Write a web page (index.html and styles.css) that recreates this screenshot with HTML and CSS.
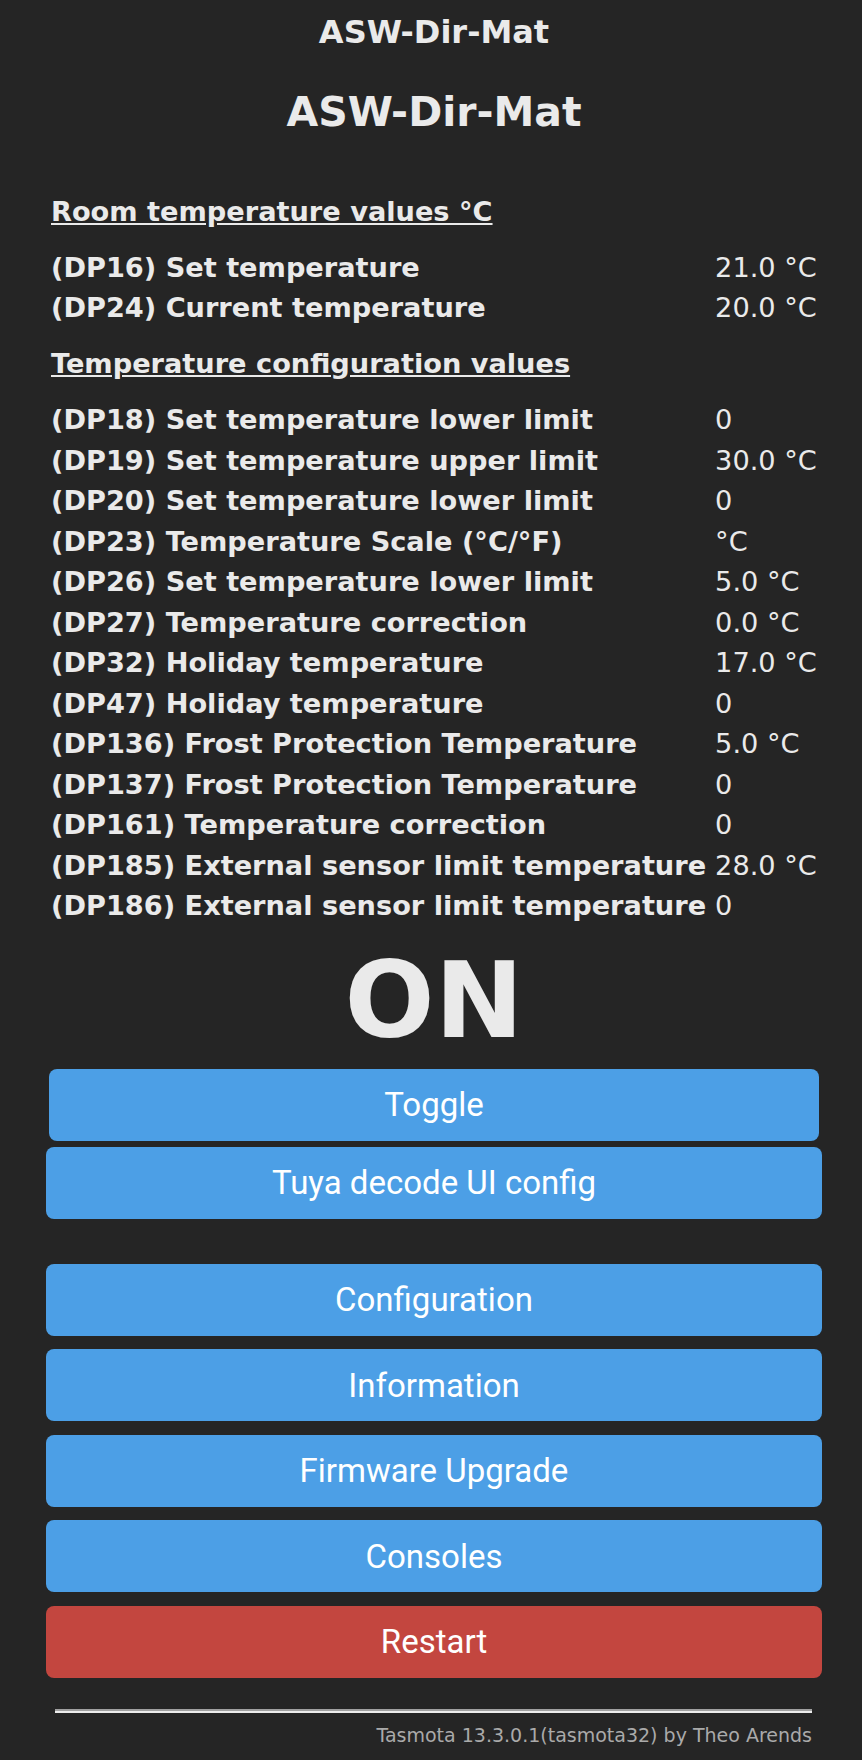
FILE: index.html
```html
<!DOCTYPE html>
<html>
<head>
<meta charset="utf-8">
<title>ASW-Dir-Mat - Main Menu</title>
<link rel="stylesheet" href="styles.css">
</head>
<body>
<div class="page">
  <div class="header">
    <h3 class="module">ASW-Dir-Mat</h3>
    <h2 class="device">ASW-Dir-Mat</h2>
  </div>

  <div class="sensors">
    <div class="section-title first">Room temperature values °C</div>
    <div class="label">(DP16) Set temperature</div><div class="value">21.0 °C</div>
    <div class="label">(DP24) Current temperature</div><div class="value">20.0 °C</div>

    <div class="section-title second">Temperature configuration values</div>
    <div class="label">(DP18) Set temperature lower limit</div><div class="value">0</div>
    <div class="label">(DP19) Set temperature upper limit</div><div class="value">30.0 °C</div>
    <div class="label">(DP20) Set temperature lower limit</div><div class="value">0</div>
    <div class="label">(DP23) Temperature Scale (°C/°F)</div><div class="value">°C</div>
    <div class="label">(DP26) Set temperature lower limit</div><div class="value">5.0 °C</div>
    <div class="label">(DP27) Temperature correction</div><div class="value">0.0 °C</div>
    <div class="label">(DP32) Holiday temperature</div><div class="value">17.0 °C</div>
    <div class="label">(DP47) Holiday temperature</div><div class="value">0</div>
    <div class="label">(DP136) Frost Protection Temperature</div><div class="value">5.0 °C</div>
    <div class="label">(DP137) Frost Protection Temperature</div><div class="value">0</div>
    <div class="label">(DP161) Temperature correction</div><div class="value">0</div>
    <div class="label">(DP185) External sensor limit temperature</div><div class="value">28.0 °C</div>
    <div class="label">(DP186) External sensor limit temperature</div><div class="value">0</div>
  </div>

  <div class="state">ON</div>

  <div class="toggle-wrap">
    <button class="btn">Toggle</button>
  </div>
  <div class="tuya-wrap">
    <button class="btn">Tuya decode UI config</button>
  </div>

  <div class="menu">
    <button class="btn">Configuration</button>
    <button class="btn">Information</button>
    <button class="btn">Firmware Upgrade</button>
    <button class="btn">Consoles</button>
    <button class="btn btn-red">Restart</button>
  </div>

  <div class="footer">
    <hr class="rule">
    <div class="credits">Tasmota 13.3.0.1(tasmota32) by Theo Arends</div>
  </div>
</div>
</body>
</html>
```
FILE: styles.css
```css
html, body {
  margin: 0;
  padding: 0;
  background: #252525;
}

body {
  color: #eaeaea;
  font-family: "DejaVu Sans", Verdana, sans-serif;
}

.page {
  margin-left: 46px;
  width: 776px;
  display: flex;
  flex-direction: column;
}

.header {
  text-align: center;
  padding-top: 13px;
}

.module {
  margin: 0;
  font-size: 32px;
  line-height: 38px;
  font-weight: bold;
}

.device {
  margin: 37px 0 0 0;
  font-size: 41px;
  line-height: 48px;
  font-weight: bold;
}

.sensors {
  margin: 56px 0 0 5px;
  display: grid;
  grid-template-columns: max-content auto;
  column-gap: 9px;
  font-size: 27.2px;
  line-height: 40.5px;
}

.section-title {
  grid-column: 1 / -1;
  font-weight: bold;
  text-decoration: underline;
}

.section-title.first {
  margin-bottom: 15px;
}

.section-title.second {
  margin-top: 15px;
  margin-bottom: 16px;
}

.label {
  font-weight: bold;
  white-space: nowrap;
}

.value {
  white-space: nowrap;
}

.state {
  margin-top: 14px;
  text-align: center;
  font-size: 106px;
  line-height: 120px;
  font-weight: bold;
}

.btn {
  display: block;
  width: 100%;
  height: 72px;
  border: 0;
  border-radius: 8px;
  background: #4c9fe6;
  color: #ffffff;
  font-family: Roboto, "Liberation Sans", sans-serif;
  font-size: 33px;
  padding: 0;
}

.btn-red {
  background: #c3463f;
}

.toggle-wrap {
  margin-top: 8px;
  padding: 0 3px;
}

.tuya-wrap {
  margin-top: 6px;
}

.menu {
  margin-top: 45px;
  display: flex;
  flex-direction: column;
  gap: 13.5px;
}

.footer {
  margin-top: 31px;
  padding: 0 10px 0 9px;
}

.rule {
  margin: 0;
  height: 0;
  border: 0;
  border-top: 2px solid #a0a0a0;
  border-bottom: 2px solid #ececec;
}

.credits {
  margin-top: 10px;
  text-align: right;
  font-size: 19px;
  line-height: 24px;
  color: #aaaaaa;
}
```
